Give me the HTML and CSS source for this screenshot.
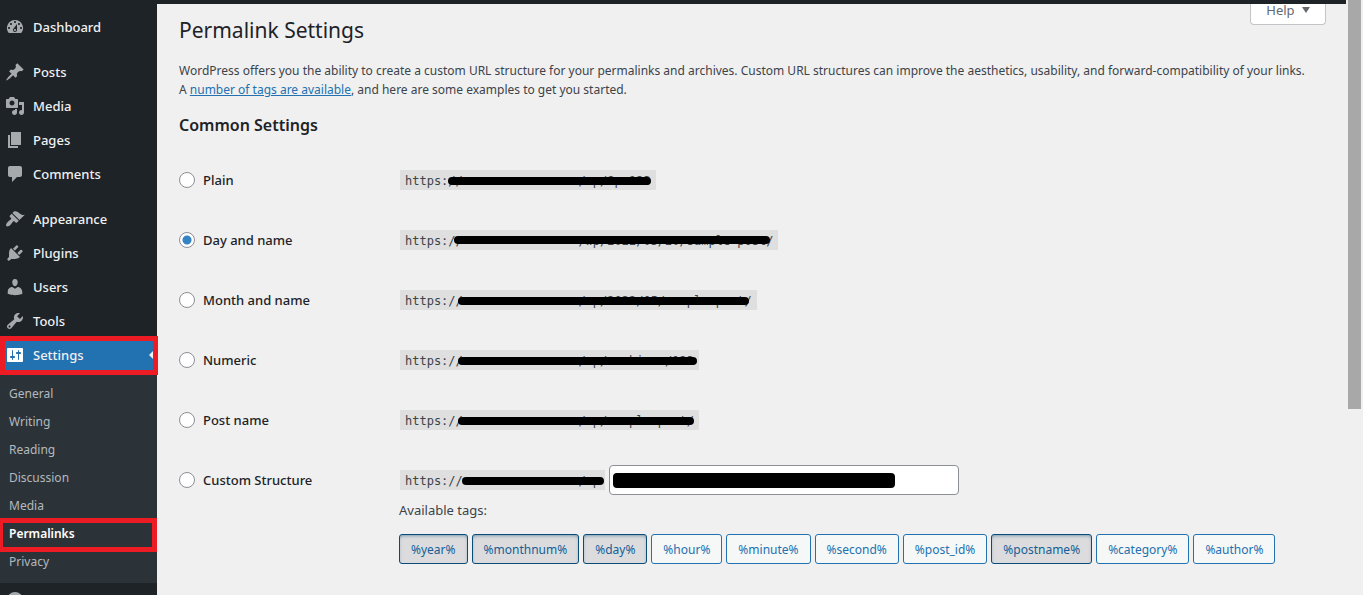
FILE: index.html
```html
<!DOCTYPE html>
<html lang="en">
<head>
    <meta charset="utf-8">
    <title>Permalink Settings</title>
    <link rel="stylesheet" href="styles.css">
</head>
<body>

<div class="topbar"></div>

<div class="page">
    <nav class="sidebar">
        <ul class="menu">
            <li><a href="#"><svg viewBox="0 0 20 20"><path fill-rule="evenodd" d="M3.76 16h12.48A7.998 7.998 0 0 0 10 3a7.998 7.998 0 0 0-6.24 13zM10 4c.55 0 1 .45 1 1s-.45 1-1 1-1-.45-1-1 .45-1 1-1zM6 6c.55 0 1 .45 1 1s-.45 1-1 1-1-.45-1-1 .45-1 1-1zm8 0c.55 0 1 .45 1 1s-.45 1-1 1-1-.45-1-1 .45-1 1-1zm-5.37 5.55L12 7v6c0 1.1-.9 2-2 2s-2-.9-2-2c0-.57.24-1.08.63-1.45zM4 10c.55 0 1 .45 1 1s-.45 1-1 1-1-.45-1-1 .45-1 1-1zm12 0c.55 0 1 .45 1 1s-.45 1-1 1-1-.45-1-1 .45-1 1-1zm-5 3c0-.55-.45-1-1-1s-1 .45-1 1 .45 1 1 1 1-.45 1-1z"/></svg>Dashboard</a></li>
            <li class="separator"></li>
            <li><a href="#"><svg viewBox="0 0 20 20"><path d="M10.44 3.02l1.82-1.82 6.36 6.35-1.83 1.82c-1.05-.68-2.48-.57-3.41.36l-.75.75c-.92.93-1.04 2.35-.35 3.41l-1.83 1.82-2.41-2.41-2.8 2.79c-.42.42-3.38 2.71-3.8 2.29s1.86-3.39 2.28-3.81l2.79-2.79L4.1 9.36l1.83-1.82c1.05.69 2.48.57 3.4-.36l.75-.75c.93-.92 1.05-2.35.36-3.41z"/></svg>Posts</a></li>
            <li><a href="#"><svg viewBox="0 0 20 20"><path fill-rule="evenodd" d="M13 11V4c0-.55-.45-1-1-1h-1.67L9 1H5L3.67 3H2c-.55 0-1 .45-1 1v7c0 .55.45 1 1 1h10c.55 0 1-.45 1-1zM7 4.5c1.38 0 2.5 1.12 2.5 2.5S8.38 9.5 7 9.5 4.5 8.38 4.5 7 5.62 4.5 7 4.5zM14 6h5v10.5c0 1.38-1.12 2.5-2.5 2.5S14 17.88 14 16.5s1.12-2.5 2.5-2.5c.17 0 .34.02.5.05V9h-3V6zm-4 8.05V13h2v3.5c0 1.38-1.12 2.5-2.5 2.5S7 17.88 7 16.5 8.12 14 9.5 14c.17 0 .34.02.5.05z"/></svg>Media</a></li>
            <li><a href="#"><svg viewBox="0 0 20 20"><path d="M6 15V2h10v13H6zm-1 1h8v2H3V5h2v11z"/></svg>Pages</a></li>
            <li><a href="#"><svg viewBox="0 0 20 20"><path d="M5 2h10c1.1 0 2 .9 2 2v7c0 1.1-.9 2-2 2h-3l-5 5v-5H5c-1.1 0-2-.9-2-2V4c0-1.1.9-2 2-2z"/></svg>Comments</a></li>
            <li class="separator"></li>
            <li><a href="#"><svg viewBox="0 0 20 20"><path d="M14.48 11.06L7.41 3.99l1.5-1.5c.5-.56 2.3-.47 3.51.32 1.21.8 1.43 1.28 2.91 2.1 1.18.64 2.45 1.26 4.45.85zm-.71.71L6.7 4.7 4.93 6.47c-.39.39-.39 1.02 0 1.41l1.06 1.06c.39.39.39 1.03 0 1.42-.6.6-1.43 1.11-2.21 1.69-.35.26-.7.53-1.01.84C1.43 14.23.4 16.08 1.4 17.07c.99 1 2.84-.03 4.18-1.36.31-.31.58-.66.85-1.02.57-.78 1.08-1.61 1.69-2.21.39-.39 1.02-.39 1.41 0l1.06 1.06c.39.39 1.02.39 1.41 0z"/></svg>Appearance</a></li>
            <li><a href="#"><svg viewBox="0 0 20 20"><path d="M13.11 4.36L9.87 7.6 8 5.73l3.24-3.24c.35-.34 1.05-.2 1.56.32.52.51.66 1.21.31 1.55zm-8 1.77l.91-1.12 9.01 9.01-1.19.84c-.71.71-2.63 1.16-3.82 1.16H6.14L4.9 17.26c-.59.59-1.54.59-2.12 0-.59-.58-.59-1.53 0-2.12l1.24-1.24v-3.88c0-1.13.4-3.19 1.09-3.89zm7.26 3.97l3.24-3.24c.34-.35 1.04-.21 1.55.31.52.51.66 1.21.31 1.55l-3.24 3.25z"/></svg>Plugins</a></li>
            <li><a href="#"><svg viewBox="0 0 20 20"><path d="M10 9.25c-2.27 0-2.73-3.44-2.73-3.44C7 4.02 7.82 2 9.97 2c2.16 0 2.98 2.02 2.71 3.81 0 0-.41 3.44-2.68 3.44zm0 2.57L12.72 10c2.39 0 4.52 2.33 4.52 4.53v2.49s-3.65 1.13-7.24 1.13c-3.65 0-7.24-1.13-7.24-1.13v-2.49c0-2.25 1.94-4.48 4.47-4.48z"/></svg>Users</a></li>
            <li><a href="#"><svg viewBox="0 0 20 20"><path fill-rule="evenodd" d="M16.68 9.77c-1.34 1.34-3.3 1.67-4.95.99l-5.41 6.52c-.99.99-2.59.99-3.58 0s-.99-2.59 0-3.57l6.52-5.42c-.68-1.65-.35-3.61.99-4.95 1.28-1.28 3.12-1.62 4.72-1.06l-2.89 2.89 2.82 2.82 2.86-2.87c.53 1.58.18 3.39-1.08 4.65zM3.81 16.21c.4.39 1.04.39 1.43 0 .4-.4.4-1.04 0-1.43-.39-.4-1.03-.4-1.43 0-.39.39-.39 1.03 0 1.43z"/></svg>Tools</a></li>
            <li class="current"><a href="#"><svg viewBox="0 0 20 20"><path fill-rule="evenodd" d="M18 16V4c0-.55-.45-1-1-1H3c-.55 0-1 .45-1 1v12c0 .55.45 1 1 1h14c.55 0 1-.45 1-1zM8 11h1c.55 0 1 .45 1 1s-.45 1-1 1H8v1.5c0 .28-.22.5-.5.5s-.5-.22-.5-.5V13H6c-.55 0-1-.45-1-1s.45-1 1-1h1V5.5c0-.28.22-.5.5-.5s.5.22.5.5V11zm5-2h-1c-.55 0-1-.45-1-1s.45-1 1-1h1V5.5c0-.28.22-.5.5-.5s.5.22.5.5V7h1c.55 0 1 .45 1 1s-.45 1-1 1h-1v5.5c0 .28-.22.5-.5.5s-.5-.22-.5-.5V9z"/></svg>Settings</a><span class="mark"></span></li>
        </ul>
        <ul class="submenu">
            <li><a href="#">General</a></li>
            <li><a href="#">Writing</a></li>
            <li><a href="#">Reading</a></li>
            <li><a href="#">Discussion</a></li>
            <li><a href="#">Media</a></li>
            <li class="active"><a href="#">Permalinks</a><span class="mark"></span></li>
            <li><a href="#">Privacy</a></li>
        </ul>
        <button class="collapse" aria-label="Collapse menu"><svg viewBox="0 0 20 20"><path fill-rule="evenodd" d="M10 2a8 8 0 1 0 0 16 8 8 0 0 0 0-16zM12 6v8l-5-4z"/></svg></button>
    </nav>

    <main class="content">
        <div class="heading">
            <h1>Permalink Settings</h1>
            <button class="help">Help <span class="arrow"></span></button>
        </div>
        <p class="intro">WordPress offers you the ability to create a custom URL structure for your permalinks and archives. Custom URL structures can improve the aesthetics, usability, and forward-compatibility of your links.<br>A <a href="#">number of tags are available</a>, and here are some examples to get you started.</p>

        <h2>Common Settings</h2>

        <form>
            <div class="row">
                <label><input type="radio" name="structure">Plain</label>
                <code>https://                /wp/?p=123<span class="bar plain"></span></code>
            </div>
            <div class="row">
                <label><input type="radio" name="structure" checked>Day and name</label>
                <code>https://                /wp/2022/05/20/sample-post/<span class="bar day"></span></code>
            </div>
            <div class="row">
                <label><input type="radio" name="structure">Month and name</label>
                <code>https://                /wp/2022/05/sample-post/<span class="bar month"></span></code>
            </div>
            <div class="row">
                <label><input type="radio" name="structure">Numeric</label>
                <code>https://                /wp/archives/123<span class="bar numeric"></span></code>
            </div>
            <div class="row">
                <label><input type="radio" name="structure">Post name</label>
                <code>https://                /wp/sample-post/<span class="bar post"></span></code>
            </div>
            <div class="row last">
                <label><input type="radio" name="structure">Custom Structure</label>
                <div class="custom">
                    <code>https://                /wp<span class="bar base"></span></code>
                    <div class="field">
                        <input type="text" aria-label="Custom structure">
                        <span class="bar value"></span>
                    </div>
                </div>
            </div>
            <div class="tags">
                <p>Available tags:</p>
                <div class="buttons">
                    <button type="button" class="on">%year%</button>
                    <button type="button" class="on">%monthnum%</button>
                    <button type="button" class="on">%day%</button>
                    <button type="button">%hour%</button>
                    <button type="button">%minute%</button>
                    <button type="button">%second%</button>
                    <button type="button">%post_id%</button>
                    <button type="button" class="on">%postname%</button>
                    <button type="button">%category%</button>
                    <button type="button">%author%</button>
                </div>
            </div>
        </form>
    </main>

    <div class="scrollbar"><div class="thumb"></div></div>
</div>

</body>
</html>
```
FILE: styles.css
```css
* {
    box-sizing: border-box;
}

body {
    position: relative;
    height: 100vh;
    margin: 0;
    overflow: hidden;
    background-color: #f0f0f0;
    color: #3c434a;
    font-family: "Noto Sans", sans-serif;
    font-size: 12px;
}

ul {
    list-style: none;
    margin: 0;
    padding: 0;
}

/* the admin bar stops where the scrollbar starts */
.topbar {
    height: 4px;
    margin-right: 17px;
    background-color: #1d2327;
}

.page {
    display: flex;
    min-height: 100vh;
}

/* sidebar */
.sidebar {
    width: 157px;
    flex: none;
    padding-top: 6px;
    background-color: #1d2327;
}

.menu li {
    position: relative;
}

.menu a {
    display: flex;
    align-items: center;
    gap: 8px;
    height: 34px;
    padding-left: 5px;
    color: #f0f0f1;
    font-size: 13px;
    font-weight: 500;
    text-decoration: none;
}

.sidebar svg {
    width: 20px;
    height: 20px;
    fill: #a7aaad;
}

.menu .separator {
    height: 11px;
}

.menu .current {
    background-color: #2271b1;
}

.menu .current svg {
    fill: white;
}

.menu .current::after {
    content: "";
    position: absolute;
    right: 3px;
    top: 12px;
    border: 5px solid transparent;
    border-left-width: 0;
    border-right-color: #f0f0f0;
}

.submenu {
    padding: 8px 0 7px;
    background-color: #2c3338;
}

.submenu li {
    position: relative;
}

.submenu a {
    display: block;
    padding-left: 9px;
    color: #b4b9be;
    line-height: 28px;
    text-decoration: none;
}

.submenu .active a {
    color: white;
    font-weight: 600;
}

/* red frames round the two highlighted items */
.mark {
    position: absolute;
    z-index: 1;
    border: 5px solid #ed1c24;
}

.current .mark {
    inset: -2px -1px -3px 0;
}

.active .mark {
    inset: -2px 0 -4px 0;
    border-left-width: 3px;
}

.collapse {
    display: block;
    height: 34px;
    padding: 7px 5px;
    border: 0;
    background: none;
}

/* content */
.content {
    flex: 1;
    padding: 0 20px 0 22px;
}

.heading {
    display: flex;
    justify-content: space-between;
    align-items: flex-start;
}

h1 {
    margin: 10px 0 0;
    color: #1d2327;
    font-size: 21px;
    font-weight: 400;
    line-height: 32px;
}

.help {
    height: 21px;
    padding: 0 15px 8px;
    border: 1px solid #c3c4c7;
    border-top: 0;
    border-radius: 0 0 4px 4px;
    background-color: white;
    color: #646970;
    font-family: inherit;
    font-size: 13px;
    line-height: 12px;
}

.arrow {
    display: inline-block;
    margin: 0 0 2px 4px;
    border: 4px solid transparent;
    border-top: 6px solid #646970;
    border-bottom: 0;
}

.intro {
    margin: 15px 0 0;
    line-height: 19px;
}

.intro a {
    color: #2271b1;
}

h2 {
    margin: 15px 0 0;
    color: #1d2327;
    font-size: 16px;
    font-weight: 600;
    line-height: 22px;
}

form {
    margin-top: 14px;
}

.row {
    display: grid;
    grid-template-columns: 221px 1fr;
    align-items: center;
    justify-items: start;
    min-height: 60px;
    padding: 15px 0;
}

.row.last {
    min-height: 50px;
    padding-bottom: 5px;
}

.row label {
    display: flex;
    align-items: center;
    gap: 8px;
    color: #1d2327;
    font-size: 13px;
    font-weight: 500;
}

input[type="radio"] {
    appearance: none;
    width: 16px;
    height: 16px;
    margin: 0;
    border: 1px solid #8c8f94;
    border-radius: 50%;
    background-color: white;
}

input[type="radio"]:checked {
    background: radial-gradient(circle, #3582c4 4px, white 5px);
}

code {
    position: relative;
    padding: 2px 5px 0;
    background-color: #dfdfdf;
    font-family: "DejaVu Sans Mono", monospace;
    font-size: 12px;
    line-height: 18px;
    white-space: pre;
}

/* black strokes over the addresses */
.bar {
    position: absolute;
    top: 7px;
    right: 5px;
    left: 58px;
    height: 8px;
    border-radius: 4px;
    background-color: black;
}

.bar.plain {
    left: 48px;
}

.bar.day {
    top: 6px;
    right: 8px;
    left: 54px;
}

.bar.month {
    right: 8px;
}

.bar.numeric {
    right: 2px;
}

.bar.base {
    right: 1px;
    left: 62px;
}

.custom {
    display: flex;
    align-items: center;
    gap: 4px;
}

.field {
    position: relative;
}

.field input {
    display: block;
    width: 350px;
    height: 30px;
    padding: 0 8px;
    border: 1px solid #8c8f94;
    border-radius: 4px;
    background-color: white;
}

.bar.value {
    top: 8px;
    right: 64px;
    left: 4px;
    height: 15px;
}

.tags {
    margin-left: 220px;
}

.tags p {
    margin: 0;
    font-size: 13px;
    line-height: 20px;
}

.buttons {
    display: flex;
    flex-wrap: wrap;
    gap: 4px;
    margin-top: 14px;
}

.buttons button {
    height: 30px;
    padding: 0 11px;
    border: 1px solid #2271b1;
    border-radius: 3px;
    background-color: #f6f7f7;
    color: #2271b1;
    font-family: inherit;
    font-size: 12px;
}

.buttons .on {
    border-color: #0a4b78;
    background-color: #dcdcde;
    box-shadow: inset 0 2px 5px -3px #0a4b78;
    color: #135e96;
}

/* scrollbar */
.scrollbar {
    width: 17px;
    flex: none;
    margin-top: -4px;
    padding: 0 2px;
}

.thumb {
    height: 409px;
    background-color: #a8a8a8;
}
```
